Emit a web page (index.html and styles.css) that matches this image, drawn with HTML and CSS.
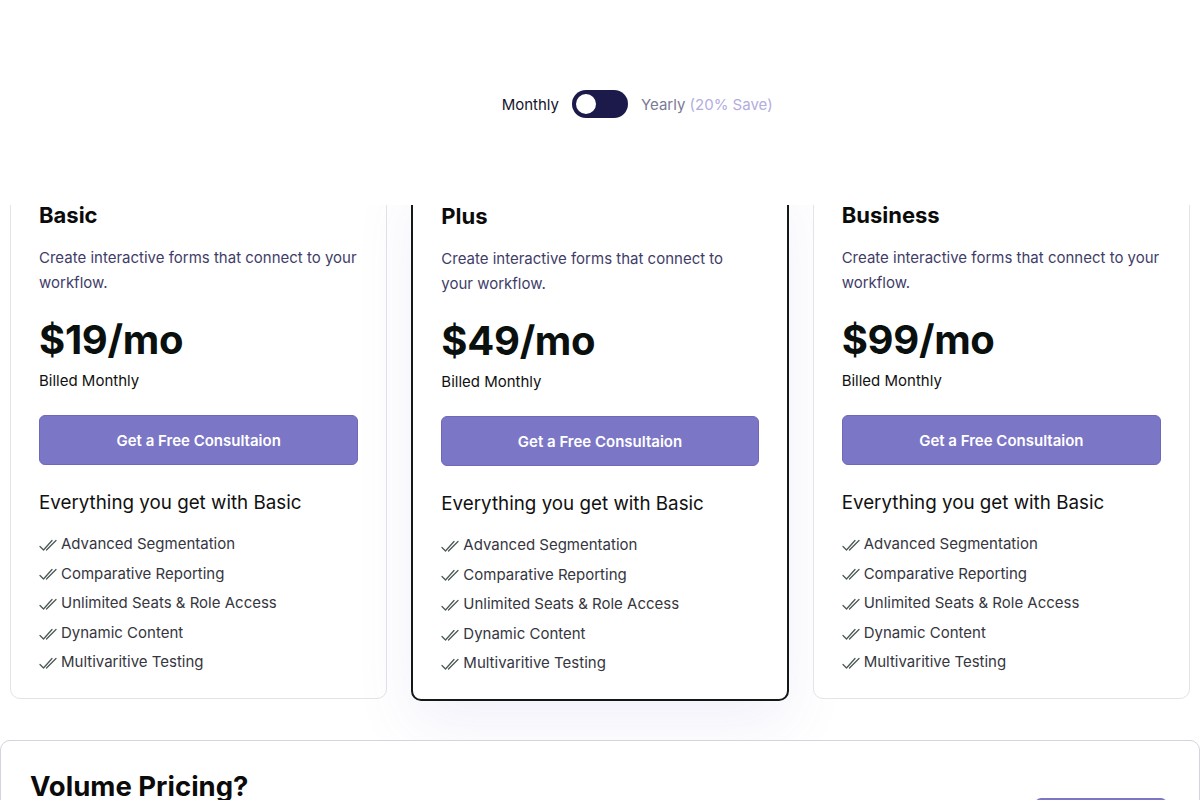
FILE: index.html
```html
<!DOCTYPE html>
<html lang="en">
<head>
  <meta charset="UTF-8" />
  <meta name="viewport" content="width=device-width, initial-scale=1.0"/>
  <title>Pricing</title>
  <link rel="stylesheet" href="styles.css">
</head>
<body>

  <section class="billing">
    <span class="billing-label left">Monthly</span>
    <button class="switch" aria-label="Toggle billing"><span class="knob"></span></button>
    <span class="billing-label muted">Yearly <span class="save">(20% Save)</span></span>
  </section>

  <div class="plans-view">
    <div class="plans">

      <div class="plan">
        <h3>Basic</h3>
        <p class="desc">Create interactive forms that connect to your workflow.</p>
        <div class="price">$19/mo</div>
        <div class="billed">Billed Monthly</div>
        <button class="cta">Get a Free Consultaion</button>
        <h4>Everything you get with Basic</h4>
        <ul class="features">
          <li><svg class="tick" viewBox="0 0 22 14"><path d="M1 8.5 4.5 12 13 2.5M7.5 12 17 2.5"/></svg>Advanced Segmentation</li>
          <li><svg class="tick" viewBox="0 0 22 14"><path d="M1 8.5 4.5 12 13 2.5M7.5 12 17 2.5"/></svg>Comparative Reporting</li>
          <li><svg class="tick" viewBox="0 0 22 14"><path d="M1 8.5 4.5 12 13 2.5M7.5 12 17 2.5"/></svg>Unlimited Seats &amp; Role Access</li>
          <li><svg class="tick" viewBox="0 0 22 14"><path d="M1 8.5 4.5 12 13 2.5M7.5 12 17 2.5"/></svg>Dynamic Content</li>
          <li><svg class="tick" viewBox="0 0 22 14"><path d="M1 8.5 4.5 12 13 2.5M7.5 12 17 2.5"/></svg>Multivaritive Testing</li>
        </ul>
      </div>

      <div class="plan featured">
        <h3>Plus</h3>
        <p class="desc">Create interactive forms that connect to your workflow.</p>
        <div class="price">$49/mo</div>
        <div class="billed">Billed Monthly</div>
        <button class="cta">Get a Free Consultaion</button>
        <h4>Everything you get with Basic</h4>
        <ul class="features">
          <li><svg class="tick" viewBox="0 0 22 14"><path d="M1 8.5 4.5 12 13 2.5M7.5 12 17 2.5"/></svg>Advanced Segmentation</li>
          <li><svg class="tick" viewBox="0 0 22 14"><path d="M1 8.5 4.5 12 13 2.5M7.5 12 17 2.5"/></svg>Comparative Reporting</li>
          <li><svg class="tick" viewBox="0 0 22 14"><path d="M1 8.5 4.5 12 13 2.5M7.5 12 17 2.5"/></svg>Unlimited Seats &amp; Role Access</li>
          <li><svg class="tick" viewBox="0 0 22 14"><path d="M1 8.5 4.5 12 13 2.5M7.5 12 17 2.5"/></svg>Dynamic Content</li>
          <li><svg class="tick" viewBox="0 0 22 14"><path d="M1 8.5 4.5 12 13 2.5M7.5 12 17 2.5"/></svg>Multivaritive Testing</li>
        </ul>
      </div>

      <div class="plan">
        <h3>Business</h3>
        <p class="desc">Create interactive forms that connect to your workflow.</p>
        <div class="price">$99/mo</div>
        <div class="billed">Billed Monthly</div>
        <button class="cta">Get a Free Consultaion</button>
        <h4>Everything you get with Basic</h4>
        <ul class="features">
          <li><svg class="tick" viewBox="0 0 22 14"><path d="M1 8.5 4.5 12 13 2.5M7.5 12 17 2.5"/></svg>Advanced Segmentation</li>
          <li><svg class="tick" viewBox="0 0 22 14"><path d="M1 8.5 4.5 12 13 2.5M7.5 12 17 2.5"/></svg>Comparative Reporting</li>
          <li><svg class="tick" viewBox="0 0 22 14"><path d="M1 8.5 4.5 12 13 2.5M7.5 12 17 2.5"/></svg>Unlimited Seats &amp; Role Access</li>
          <li><svg class="tick" viewBox="0 0 22 14"><path d="M1 8.5 4.5 12 13 2.5M7.5 12 17 2.5"/></svg>Dynamic Content</li>
          <li><svg class="tick" viewBox="0 0 22 14"><path d="M1 8.5 4.5 12 13 2.5M7.5 12 17 2.5"/></svg>Multivaritive Testing</li>
        </ul>
      </div>

    </div>
  </div>

  <section class="volume">
    <h2>Volume Pricing?</h2>
    <button class="outline-btn">Contact Sales</button>
  </section>

</body>
</html>
```

FILE: styles.css
```css
body {
  margin: 0;
  font-family: Inter, "Noto Sans", Arial, sans-serif;
  background: #fff;
  color: #111;
  overflow: hidden;
}

/* billing toggle */
.billing {
  display: grid;
  grid-template-columns: 1fr auto 1fr;
  align-items: center;
  column-gap: 13px;
  padding-top: 90px;
  height: 28px;
}

.billing-label {
  font-size: 15px;
  color: #14142b;
}

.billing-label.left {
  text-align: right;
}

.billing-label.muted {
  color: #7b7a98;
}

.save {
  color: #b3addf;
}

.switch {
  width: 56px;
  height: 28px;
  border: none;
  border-radius: 14px;
  background: #1b1a4a;
  padding: 0 4px;
  display: flex;
  align-items: center;
  cursor: pointer;
}

.knob {
  width: 20px;
  height: 20px;
  border-radius: 50%;
  background: #fff;
}

/* plans */
.plans-view {
  margin-top: 87px;
  overflow: hidden;
  padding-bottom: 39px;
}

.plans {
  display: grid;
  grid-template-columns: repeat(3, 1fr);
  gap: 24px;
  margin: -33px 10px 0;
  align-items: start;
}

.plan {
  background: #fff;
  border: 1px solid #e3e3ea;
  border-radius: 10px;
  padding: 28px 28px 21px;
}

.plan.featured {
  border: 2px solid #111a16;
  box-shadow: 0 24px 60px rgba(110, 105, 200, 0.09);
}

.plan h3 {
  margin: 0;
  font-size: 22px;
  line-height: 28px;
  font-weight: 700;
  color: #0b0b0b;
}

.desc {
  margin: 16px 0 0;
  font-size: 15px;
  line-height: 25px;
  color: #3f3d68;
}

.price {
  margin-top: 21px;
  font-size: 40px;
  line-height: 48px;
  font-weight: 700;
  color: #0a100d;
  letter-spacing: -0.3px;
}

.billed {
  margin-top: 6px;
  font-size: 15px;
  line-height: 22px;
  color: #111;
}

.cta {
  display: block;
  width: 100%;
  height: 50px;
  margin-top: 23px;
  background: #7b76c6;
  border: 1px solid #6e69bb;
  border-radius: 6px;
  color: #fff;
  font-family: inherit;
  font-size: 15px;
  font-weight: 600;
  cursor: pointer;
}

.plan h4 {
  margin: 24px 0 0;
  font-size: 18.8px;
  line-height: 28px;
  font-weight: 400;
  color: #111;
}

.features {
  list-style: none;
  margin: 12px 0 0;
  padding: 0;
}

.features li {
  display: flex;
  align-items: center;
  font-size: 15px;
  line-height: 29.6px;
  color: #363640;
}

.tick {
  width: 22px;
  height: 14px;
  fill: none;
  stroke: #4b5a55;
  stroke-width: 1.3;
  stroke-linecap: round;
  stroke-linejoin: round;
  margin-top: 2px;
}

/* volume pricing */
.volume {
  display: flex;
  justify-content: space-between;
  align-items: flex-start;
  border: 1px solid #d4d3de;
  border-radius: 10px;
  padding: 28px 32px 40px 29px;
}

.volume h2 {
  margin: 0;
  font-size: 27.5px;
  line-height: 34px;
  font-weight: 700;
  color: #0b0b0b;
}

.outline-btn {
  margin-top: 29px;
  width: 132px;
  height: 44px;
  background: #fff;
  border: 2px solid #7b76c6;
  border-radius: 6px;
  color: #7b76c6;
  font-family: inherit;
  font-size: 15px;
  font-weight: 600;
}
```
